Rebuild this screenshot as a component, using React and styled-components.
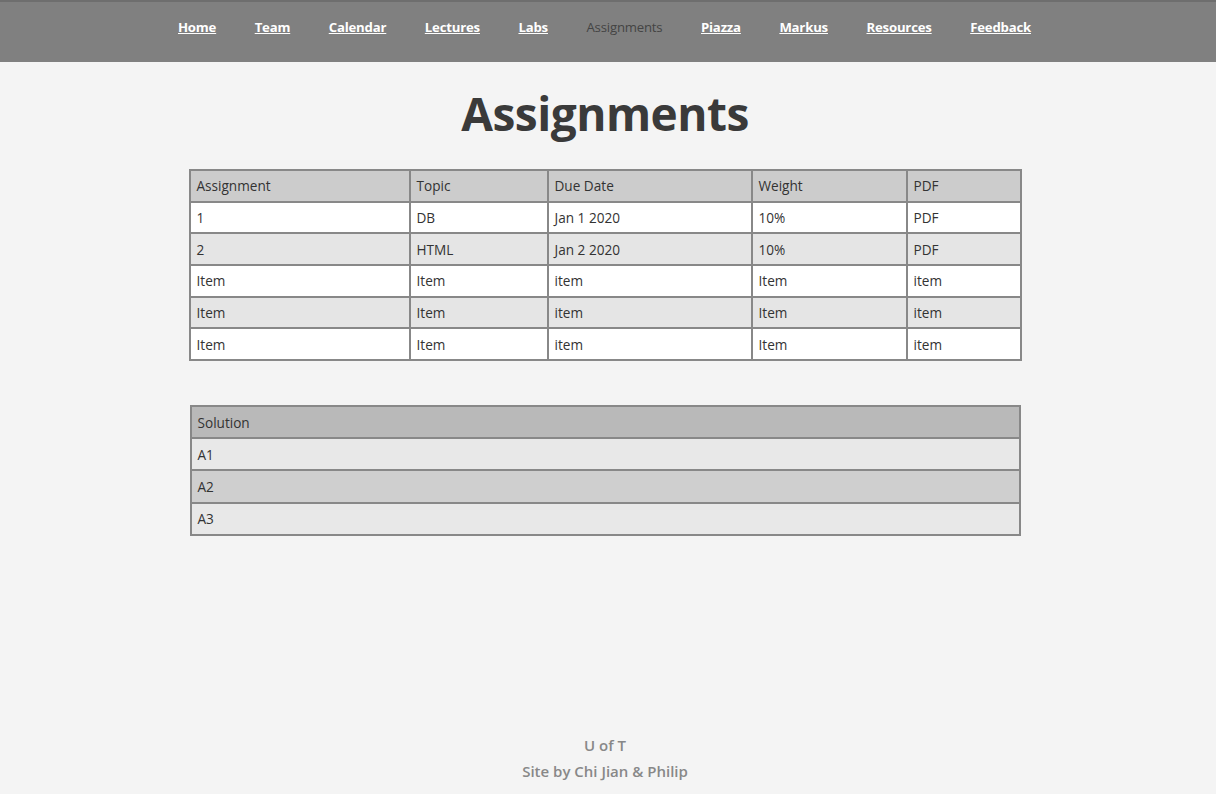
import React from 'react';
import styled, { createGlobalStyle } from 'styled-components';

const GlobalStyle = createGlobalStyle`
  html, body {
    margin: 0;
    padding: 0;
    background: #f4f4f4;
    font-family: "Open Sans", "Noto Sans", sans-serif;
    color: #333;
  }
`;

const Page = styled.div`
  min-height: 794px;
  display: flex;
  flex-direction: column;
`;

const NavBar = styled.nav`
  height: 62px;
  box-sizing: border-box;
  background: #808080;
  border-top: 2px solid #6e6e6e;
  display: flex;
  align-items: center;
  justify-content: center;
  padding-right: 7px;
  gap: 38.5px;
`;

const NavLink = styled.a`
  font-size: 13.2px;
  color: ${(p) => (p.active ? '#444' : '#fff')};
  font-weight: ${(p) => (p.active ? 400 : 700)};
  text-decoration: ${(p) => (p.active ? 'none' : 'underline')};
  letter-spacing: -0.2px;
  margin-top: -10px;
  cursor: pointer;
`;

const Main = styled.main`
  flex: 1;
  display: flex;
  flex-direction: column;
  align-items: center;
  padding-right: 6px;
`;

const Title = styled.h1`
  margin: 23px 0 28px;
  font-size: 46px;
  font-weight: 700;
  color: #3a3a3a;
  letter-spacing: -0.5px;
  line-height: 56px;
`;

const Table = styled.table`
  border-collapse: collapse;
  width: 831px;
  table-layout: fixed;
  margin-bottom: ${(p) => p.gap || 0}px;
  border: 2px solid #888;
`;

const Cell = styled.td`
  border: 2px solid #888;
  height: ${(p) => p.h}px;
  padding: 0 6px;
  font-size: 13.6px;
  font-weight: 400;
  color: #333;
  text-align: left;
  box-sizing: border-box;
  background: ${(p) => p.bg};
`;

const Footer = styled.footer`
  text-align: center;
  color: #888;
  font-size: 15px;
  font-weight: 600;
  line-height: 26px;
  padding: 0 6px 10px 0;
`;

const links = ['Home', 'Team', 'Calendar', 'Lectures', 'Labs', 'Assignments', 'Piazza', 'Markus', 'Resources', 'Feedback'];

const widths = [220, 138, 204, 155, 114];

const rows = [
  ['1', 'DB', 'Jan 1 2020', '10%', 'PDF'],
  ['2', 'HTML', 'Jan 2 2020', '10%', 'PDF'],
  ['Item', 'Item', 'item', 'Item', 'item'],
  ['Item', 'Item', 'item', 'Item', 'item'],
  ['Item', 'Item', 'item', 'Item', 'item'],
];

const solutionBg = ['#e8e8e8', '#cfcfcf', '#e8e8e8'];

export default function App() {
  return (
    <Page>
      <GlobalStyle />
      <NavBar>
        {links.map((l) => (
          <NavLink key={l} active={l === 'Assignments'}>
            {l}
          </NavLink>
        ))}
      </NavBar>
      <Main>
        <Title>Assignments</Title>
        <Table gap={44}>
          <colgroup>
            {widths.map((w, i) => (
              <col key={i} style={{ width: w }} />
            ))}
          </colgroup>
          <thead>
            <tr>
              {['Assignment', 'Topic', 'Due Date', 'Weight', 'PDF'].map((h) => (
                <Cell as="th" key={h} h={31.67} bg="#cccccc">
                  {h}
                </Cell>
              ))}
            </tr>
          </thead>
          <tbody>
            {rows.map((r, i) => (
              <tr key={i}>
                {r.map((c, j) => (
                  <Cell key={j} h={31.67} bg={i % 2 ? '#e5e5e5' : '#ffffff'}>
                    {c}
                  </Cell>
                ))}
              </tr>
            ))}
          </tbody>
        </Table>
        <Table>
          <thead>
            <tr>
              <Cell as="th" h={32.25} bg="#b9b9b9">
                Solution
              </Cell>
            </tr>
          </thead>
          <tbody>
            {['A1', 'A2', 'A3'].map((a, i) => (
              <tr key={a}>
                <Cell h={32.25} bg={solutionBg[i]}>
                  {a}
                </Cell>
              </tr>
            ))}
          </tbody>
        </Table>
      </Main>
      <Footer>
        <div>U of T</div>
        <div>Site by Chi Jian &amp; Philip</div>
      </Footer>
    </Page>
  );
}
